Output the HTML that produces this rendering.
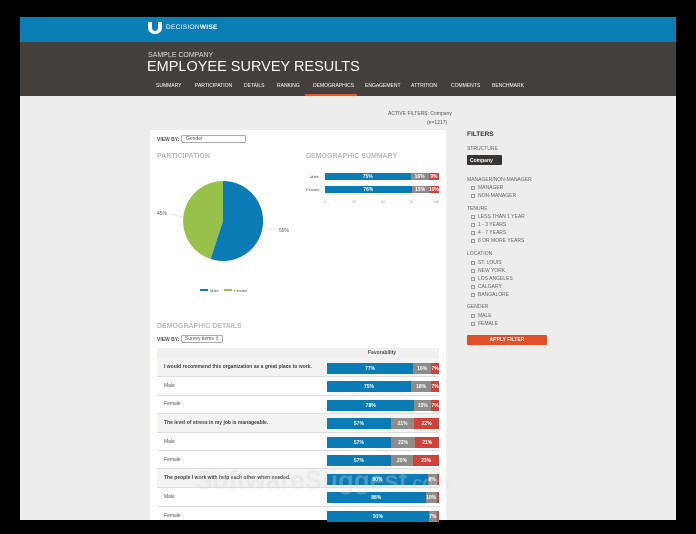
<!DOCTYPE html>
<html><head><meta charset="utf-8"><style>
*{margin:0;padding:0;box-sizing:border-box}
body{width:696px;height:534px;background:#000;position:relative;overflow:hidden;font-family:"Liberation Sans",sans-serif}
.a{position:absolute}
.t{position:absolute;font-size:5px;color:#555;white-space:nowrap}
.nav{position:absolute;top:83px;font-size:5px;color:#fff;white-space:nowrap}
.bar{position:absolute;height:11px;display:flex;font-size:5px;color:#fff;font-weight:bold}
.bar div{display:flex;align-items:center;justify-content:center}
.b{background:#0a7bb4}.g{background:#8e8c8a}.r{background:#d0413a}
.row{position:absolute;left:157px;width:282px;border-bottom:1px solid #ddd}
.fl{position:absolute;left:467px;font-size:5px;color:#666;white-space:nowrap}
.cb{display:inline-block;width:4px;height:4px;border:0.5px solid #999;margin-right:3px;vertical-align:middle}
</style></head><body>
<div class="a" style="left:20px;top:17px;width:656px;height:25px;background:#0a7fb5"></div>
<svg class="a" style="left:148px;top:22px" width="14" height="12" viewBox="0 0 14 12"><path d="M0 0h4v6a3 3 0 0 0 6 0V0h4v6a7 6 0 0 1-14 0z" fill="#fff"/></svg>
<div class="t" style="left:166px;top:24px;color:#fff;font-size:6.5px;letter-spacing:.3px">DECISION<b>WISE</b></div>
<div class="a" style="left:20px;top:42px;width:656px;height:54px;background:#46403c"></div>
<div class="t" style="left:148px;top:52px;color:#ddd;font-size:7px">SAMPLE COMPANY</div>
<div class="t" style="left:147px;top:59px;color:#fff;font-size:14.5px">EMPLOYEE SURVEY RESULTS</div>
<div class="nav" style="left:156px">SUMMARY</div>
<div class="nav" style="left:195px">PARTICIPATION</div>
<div class="nav" style="left:244px">DETAILS</div>
<div class="nav" style="left:277px">RANKING</div>
<div class="nav" style="left:313px">DEMOGRAPHICS</div>
<div class="a" style="left:305px;top:94px;width:52px;height:2px;background:#e05a2b"></div>
<div class="nav" style="left:365px">ENGAGEMENT</div>
<div class="nav" style="left:411px">ATTRITION</div>
<div class="nav" style="left:451px">COMMENTS</div>
<div class="nav" style="left:492px">BENCHMARK</div>
<div class="a" style="left:20px;top:96px;width:656px;height:424px;background:#ededeb"></div>
<div class="t" style="left:388px;top:111px">ACTIVE FILTERS: Company</div>
<div class="t" style="left:427px;top:120px">(n=1217)</div>
<div class="a" style="left:150px;top:130px;width:296px;height:390px;background:#fff"></div>
<div class="t" style="left:157px;top:137px;font-weight:bold">VIEW BY:</div>
<div class="a" style="left:181px;top:135px;width:65px;height:8px;border:1px solid #aaa;border-radius:2px;font-size:5px;color:#555;padding-left:4px;line-height:6px">Gender</div>
<div class="t" style="left:157px;top:153px;color:#bbb;font-weight:bold;font-size:7px">PARTICIPATION</div>
<div class="t" style="left:306px;top:153px;color:#bbb;font-weight:bold;font-size:7px">DEMOGRAPHIC SUMMARY</div>
<svg class="a" style="left:150px;top:170px" width="160" height="130">
<path d="M73 11 A40 40 0 1 1 60.6 89 L73 51Z" fill="#0a7bb4"/>
<path d="M60.6 89 A40 40 0 0 1 73 11 L73 51Z" fill="#97c14a"/>
<line x1="21" y1="44" x2="33" y2="47" stroke="#ccc" stroke-width=".6"/>
<line x1="113" y1="58" x2="126" y2="60" stroke="#ccc" stroke-width=".6"/>
<rect x="50" y="119" width="8" height="2" fill="#0a7bb4"/><rect x="74" y="119" width="8" height="2" fill="#97c14a"/>
</svg>
<div class="t" style="left:157px;top:211px">45%</div>
<div class="t" style="left:279px;top:228px">55%</div>
<div class="t" style="left:210px;top:288px;font-size:4px">Male</div>
<div class="t" style="left:234px;top:288px;font-size:4px">Female</div>
<div class="t" style="left:310px;top:174px;font-size:4px">Male</div>
<div class="t" style="left:306px;top:187px;font-size:4px">Female</div>
<div class="bar" style="left:325px;top:173px;width:114px;height:7px"><div class="b" style="width:75%">75%</div><div class="g" style="width:16%">16%</div><div class="r" style="width:9%">9%</div></div>
<div class="bar" style="left:325px;top:186px;width:114px;height:7px"><div class="b" style="width:76%">76%</div><div class="g" style="width:15%">15%</div><div class="r" style="width:9%">10%</div></div>
<div class="t" style="left:324px;top:200px;font-size:3.5px;color:#999">0</div>
<div class="t" style="left:352px;top:200px;font-size:3.5px;color:#999">25</div>
<div class="t" style="left:381px;top:200px;font-size:3.5px;color:#999">50</div>
<div class="t" style="left:409px;top:200px;font-size:3.5px;color:#999">75</div>
<div class="t" style="left:433px;top:200px;font-size:3.5px;color:#999">100</div>
<div class="t" style="left:157px;top:323px;color:#bbb;font-weight:bold;font-size:7px">DEMOGRAPHIC DETAILS</div>
<div class="t" style="left:157px;top:337px;font-weight:bold">VIEW BY:</div>
<div class="a" style="left:181px;top:335px;width:42px;height:8px;border:1px solid #aaa;border-radius:2px;font-size:5px;color:#555;padding-left:3px;line-height:6px">Survey items ⇕</div>
<div class="a" style="left:157px;top:348px;width:282px;height:10px;background:#f0f0ef"></div>
<div class="t" style="left:368px;top:350px;font-weight:bold">Favorability</div>
<div class="row" style="top:358px;height:19px;background:#f3f3f2"></div>
<div class="row" style="top:377px;height:18.5px"></div>
<div class="row" style="top:395.5px;height:18.5px"></div>
<div class="row" style="top:414px;height:19px;background:#f3f3f2"></div>
<div class="row" style="top:433px;height:18px"></div>
<div class="row" style="top:451px;height:18px"></div>
<div class="row" style="top:469px;height:19px;background:#f3f3f2"></div>
<div class="row" style="top:488px;height:19px"></div>
<div class="t" style="left:164px;top:364px;font-weight:bold;color:#444">I would recommend this organization as a great place to work.</div>
<div class="t" style="left:164px;top:383px">Male</div>
<div class="t" style="left:164px;top:401px">Female</div>
<div class="t" style="left:164px;top:420px;font-weight:bold;color:#444">The level of stress in my job is manageable.</div>
<div class="t" style="left:164px;top:439px">Male</div>
<div class="t" style="left:164px;top:457px">Female</div>
<div class="t" style="left:164px;top:475px;font-weight:bold;color:#444">The people I work with help each other when needed.</div>
<div class="t" style="left:164px;top:494px">Male</div>
<div class="t" style="left:164px;top:513px">Female</div>
<div class="bar" style="left:327px;top:363px;width:112px"><div class="b" style="width:77%">77%</div><div class="g" style="width:16%">16%</div><div class="r" style="width:7%">7%</div></div>
<div class="bar" style="left:327px;top:381px;width:112px"><div class="b" style="width:75%">75%</div><div class="g" style="width:18%">18%</div><div class="r" style="width:7%">7%</div></div>
<div class="bar" style="left:327px;top:400px;width:112px"><div class="b" style="width:78%">78%</div><div class="g" style="width:15%">15%</div><div class="r" style="width:7%">7%</div></div>
<div class="bar" style="left:327px;top:418px;width:112px"><div class="b" style="width:57%">57%</div><div class="g" style="width:21%">21%</div><div class="r" style="width:22%">22%</div></div>
<div class="bar" style="left:327px;top:437px;width:112px"><div class="b" style="width:57%">57%</div><div class="g" style="width:22%">22%</div><div class="r" style="width:21%">21%</div></div>
<div class="bar" style="left:327px;top:455px;width:112px"><div class="b" style="width:57%">57%</div><div class="g" style="width:20%">20%</div><div class="r" style="width:23%">23%</div></div>
<div class="bar" style="left:327px;top:474px;width:112px"><div class="b" style="width:90%">90%</div><div class="g" style="width:8%">8%</div><div class="r" style="width:2%"></div></div>
<div class="bar" style="left:327px;top:492px;width:112px"><div class="b" style="width:88%">88%</div><div class="g" style="width:10%">10%</div><div class="r" style="width:2%"></div></div>
<div class="bar" style="left:327px;top:511px;width:112px"><div class="b" style="width:91%">91%</div><div class="g" style="width:7%">7%</div><div class="r" style="width:2%"></div></div>
<div class="t" style="left:195px;top:465px;font-size:26px;font-weight:bold;color:rgba(215,215,215,.3)">SoftwareSuggest<span style="font-size:18px">.com</span></div>
<div class="fl" style="top:131px;font-weight:bold;color:#333;font-size:6.5px">FILTERS</div>
<div class="fl" style="top:146px">STRUCTURE</div>
<div class="a" style="left:467px;top:155px;width:35px;height:10px;background:#3a3532;border-radius:1px;color:#fff;font-size:5px;font-weight:bold;padding:2.5px 3px">Company</div>
<div class="fl" style="top:177px">MANAGER/NON-MANAGER</div>
<div class="fl" style="left:471px;top:185px"><span class="cb"></span>MANAGER</div>
<div class="fl" style="left:471px;top:193px"><span class="cb"></span>NON-MANAGER</div>
<div class="fl" style="top:206px">TENURE</div>
<div class="fl" style="left:471px;top:214px"><span class="cb"></span>LESS THAN 1 YEAR</div>
<div class="fl" style="left:471px;top:222px"><span class="cb"></span>1 - 3 YEARS</div>
<div class="fl" style="left:471px;top:230px"><span class="cb"></span>4 - 7 YEARS</div>
<div class="fl" style="left:471px;top:238px"><span class="cb"></span>8 OR MORE YEARS</div>
<div class="fl" style="top:251px">LOCATION</div>
<div class="fl" style="left:471px;top:260px"><span class="cb"></span>ST. LOUIS</div>
<div class="fl" style="left:471px;top:268px"><span class="cb"></span>NEW YORK</div>
<div class="fl" style="left:471px;top:276px"><span class="cb"></span>LOS ANGELES</div>
<div class="fl" style="left:471px;top:284px"><span class="cb"></span>CALGARY</div>
<div class="fl" style="left:471px;top:292px"><span class="cb"></span>BANGALORE</div>
<div class="fl" style="top:304px">GENDER</div>
<div class="fl" style="left:471px;top:313px"><span class="cb"></span>MALE</div>
<div class="fl" style="left:471px;top:321px"><span class="cb"></span>FEMALE</div>
<div class="a" style="left:467px;top:335px;width:80px;height:10px;background:#e0502b;border-radius:1px;color:#fff;font-size:5px;font-weight:bold;text-align:center;line-height:10px">APPLY FILTER</div>
</body></html>
